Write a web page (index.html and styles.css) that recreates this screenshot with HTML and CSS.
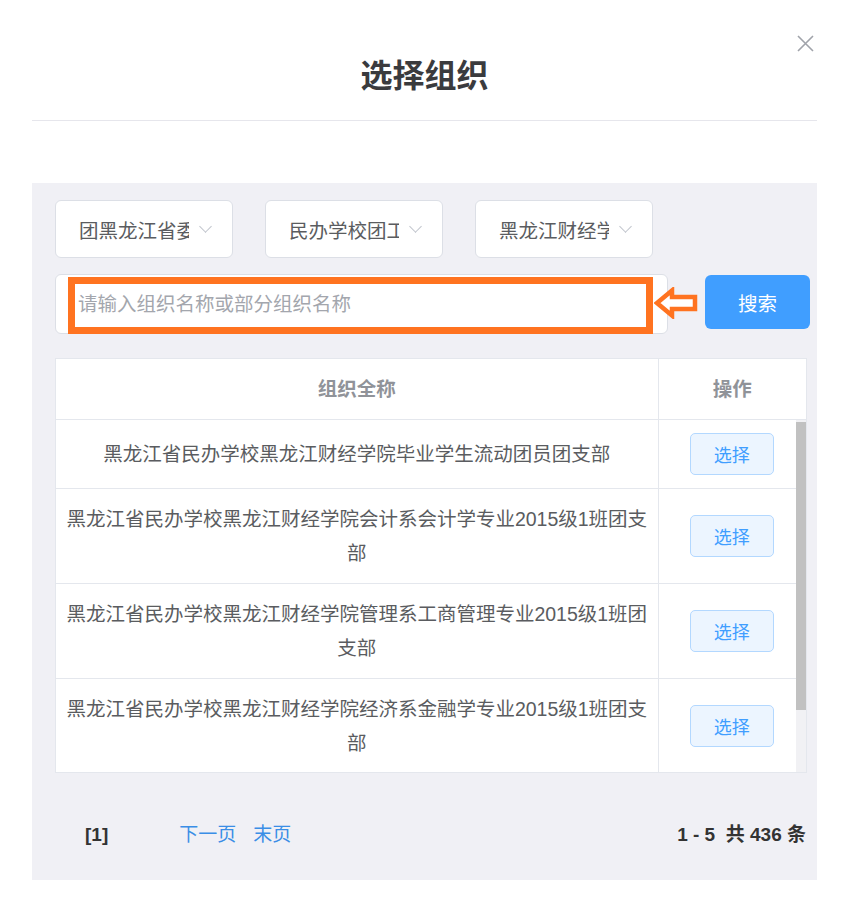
FILE: index.html
```html
<!DOCTYPE html>
<html lang="zh-CN">

<head>
    <meta charset="UTF-8">
    <title>选择组织</title>
    <link rel="stylesheet" href="styles.css">
</head>

<body>
    <div class="dialog">
        <header class="dialog-header">
            <h2 class="dialog-title">选择组织</h2>
            <button class="dialog-close" aria-label="关闭">
                <svg width="17" height="17" viewBox="0 0 17 17">
                    <path d="M1 1L16 16M16 1L1 16" stroke="#a0a3aa" stroke-width="1.6" fill="none"/>
                </svg>
            </button>
        </header>

        <section class="panel">
            <div class="filters">
                <div class="select"><span class="select-text">团黑龙江省委员会</span><i class="chevron"></i></div>
                <div class="select"><span class="select-text">民办学校团工委</span><i class="chevron"></i></div>
                <div class="select"><span class="select-text">黑龙江财经学院</span><i class="chevron"></i></div>
            </div>

            <div class="search-row">
                <div class="search-box">
                    <input class="search-input" type="text" placeholder="请输入组织名称或部分组织名称">
                    <span class="mark"></span>
                    <svg class="mark-arrow" width="44" height="32" viewBox="0 0 44 32">
                        <path d="M3 16L18 3.5V10H41V22H18V28.5Z" fill="#fff" stroke="#ff7320" stroke-width="4.5" stroke-linejoin="miter"/>
                    </svg>
                </div>
                <button class="btn-search">搜索</button>
            </div>

            <div class="table">
                <table class="table-head">
                    <colgroup><col class="col-name"><col></colgroup>
                    <tr>
                        <th>组织全称</th>
                        <th>操作</th>
                    </tr>
                </table>
                <div class="table-body">
                    <div class="table-rows">
                        <table>
                            <colgroup><col class="col-name"><col></colgroup>
                            <tr>
                                <td>黑龙江省民办学校黑龙江财经学院毕业学生流动团员团支部</td>
                                <td class="op"><button class="btn-pick">选择</button></td>
                            </tr>
                            <tr>
                                <td>黑龙江省民办学校黑龙江财经学院会计系会计学专业2015级1班团支部</td>
                                <td class="op"><button class="btn-pick">选择</button></td>
                            </tr>
                            <tr>
                                <td>黑龙江省民办学校黑龙江财经学院管理系工商管理专业2015级1班团支部</td>
                                <td class="op"><button class="btn-pick">选择</button></td>
                            </tr>
                            <tr>
                                <td>黑龙江省民办学校黑龙江财经学院经济系金融学专业2015级1班团支部</td>
                                <td class="op"><button class="btn-pick">选择</button></td>
                            </tr>
                            <tr>
                                <td>黑龙江省民办学校黑龙江财经学院财税系税务专业2015级1班团支部</td>
                                <td class="op"><button class="btn-pick">选择</button></td>
                            </tr>
                        </table>
                    </div>
                    <div class="scrollbar"><div class="scroll-thumb"></div></div>
                </div>
            </div>

            <div class="pager">
                <span class="pager-current">[1]</span>
                <a class="pager-link pager-next" href="#">下一页</a>
                <a class="pager-link" href="#">末页</a>
                <span class="pager-total">1 - 5&nbsp; 共 436 条</span>
            </div>
        </section>
    </div>
</body>

</html>
```

FILE: styles.css
```css
body {
    margin: 0;
    background-color: #fff;
    font-family: "Liberation Sans", "Noto Sans CJK SC", sans-serif;
    color: #5a5c60;
}

.dialog {
    margin: 0 33px 0 32px;
}

.dialog-header {
    position: relative;
    padding: 56px 0 24px;
    border-bottom: 1px solid #e6e6ec;
    text-align: center;
}

.dialog-title {
    margin: 0;
    font-size: 32px;
    line-height: 40px;
    font-weight: bold;
    color: #3a3b3e;
}

.dialog-close {
    position: absolute;
    top: 35px;
    right: 3px;
    padding: 0;
    border: 0;
    background: none;
}

.panel {
    margin-top: 62px;
    padding: 17px 7px 28px 23px;
    background-color: #f0f0f5;
}

/* selects */
.filters {
    display: flex;
    gap: 32px;
}

.select {
    display: flex;
    align-items: center;
    box-sizing: border-box;
    width: 178px;
    height: 58px;
    padding: 0 16px 0 23px;
    background-color: #fff;
    border: 1px solid #dcdfe6;
    border-radius: 6px;
    font-size: 19.5px;
}

.select-text {
    width: 110px;
    overflow: hidden;
    white-space: nowrap;
}

.chevron {
    width: 8px;
    height: 8px;
    margin: -5px 0 0 12px;
    border-right: 1.5px solid #c0c4cc;
    border-bottom: 1.5px solid #c0c4cc;
    transform: rotate(45deg);
}

/* search */
.search-row {
    display: flex;
    align-items: flex-start;
    gap: 37px;
    margin-top: 16px;
}

.search-box {
    position: relative;
    width: 613px;
    height: 60px;
    background-color: #fff;
    border: 1px solid #dcdfe6;
    border-radius: 6px;
    box-sizing: border-box;
}

.search-input {
    box-sizing: border-box;
    width: 100%;
    height: 100%;
    padding: 0 0 0 22px;
    border: 0;
    background: transparent;
    font-family: inherit;
    font-size: 19.5px;
    color: #606266;
}

.search-input::placeholder {
    color: #a3a6ad;
}

.mark {
    position: absolute;
    left: 12px;
    top: 2px;
    width: 585px;
    height: 57px;
    box-sizing: border-box;
    border: 7px solid #ff7320;
    pointer-events: none;
}

.mark-arrow {
    position: absolute;
    left: 598px;
    top: 12px;
}

.btn-search {
    width: 105px;
    height: 54px;
    margin-top: 1px;
    border: 0;
    border-radius: 6px;
    background-color: #409eff;
    color: #fff;
    font-family: inherit;
    font-size: 19.5px;
}

/* table */
.table {
    box-sizing: border-box;
    width: 752px;
    margin-top: 24px;
    background-color: #fff;
    border: 1px solid #e4e7ed;
    border-bottom: 0;
}

.table table {
    width: 100%;
    border-collapse: collapse;
    table-layout: fixed;
}

.col-name {
    width: 602px;
}

.table th,
.table td {
    padding: 13px 9px;
    line-height: 34px;
    font-size: 19.5px;
    text-align: center;
    border-bottom: 1px solid #e4e7ed;
}

.table th {
    font-weight: bold;
    color: #909399;
}

.table th:first-child,
.table td:first-child {
    border-right: 1px solid #e4e7ed;
}

.table-body {
    display: flex;
    height: 352px;
    overflow: hidden;
    border-bottom: 1px solid #e4e7ed;
}

.table-rows {
    flex: 1;
}

.scrollbar {
    flex: none;
    width: 10px;
    background-color: #f1f1f4;
}

.scroll-thumb {
    height: 288px;
    margin-top: 2px;
    background-color: #c1c1c1;
}

.op {
    padding-left: 18px !important;
}

.btn-pick {
    width: 84px;
    height: 42px;
    border: 1px solid #b3d8ff;
    border-radius: 5px;
    background-color: #ecf5ff;
    color: #409eff;
    font-family: inherit;
    font-size: 18px;
    vertical-align: middle;
}

/* pagination */
.pager {
    display: flex;
    align-items: center;
    margin-top: 45px;
    padding: 0 4px 0 30px;
    line-height: 34px;
    font-size: 19px;
}

.pager-current {
    font-weight: bold;
    color: #333;
}

.pager-link {
    color: #3a8ee6;
    text-decoration: none;
}

.pager-next {
    margin: 0 17px 0 71px;
}

.pager-total {
    margin-left: auto;
    font-weight: bold;
    color: #333;
}
```
